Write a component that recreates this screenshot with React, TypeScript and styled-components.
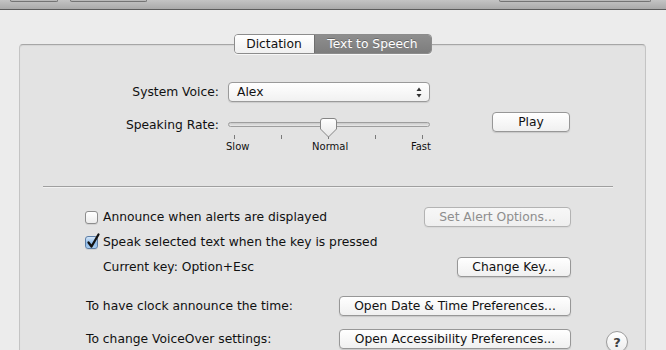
import styled, { createGlobalStyle } from "styled-components";

const GlobalStyle = createGlobalStyle`
  html, body {
    margin: 0;
    padding: 0;
    background: #ececec;
  }
  body {
    font-family: "DejaVu Sans", "Noto Sans", sans-serif;
    font-size: 12.3px;
    color: #111;
    overflow: hidden;
  }
  * { box-sizing: border-box; }
`;

const Window = styled.div`
  width: 666px;
  height: 350px;
  overflow: hidden;
  background: #ececec;
`;

const Toolbar = styled.div`
  height: 10px;
  border-bottom: 1px solid #5c5c5c;
  background: linear-gradient(#c4c4c4, #aaaaaa);
  display: flex;
  align-items: flex-start;
`;

const ToolPiece = styled.div<{ $gap: number; $width: number }>`
  margin-left: ${(p) => p.$gap}px;
  width: ${(p) => p.$width}px;
  height: 2px;
  border: 1px solid #747474;
  border-top: none;
  border-radius: 0 0 4px 4px;
  background: #b9b9b9;
`;

const Content = styled.div`
  padding: 24px 20px 0 19px;
`;

const TabBar = styled.div`
  display: flex;
  justify-content: center;
  margin-bottom: -10px;
  position: relative;
  z-index: 1;
`;

const Segmented = styled.div`
  display: flex;
  height: 20px;
  border: 1px solid #8c8c8c;
  border-radius: 4px;
  overflow: hidden;
  box-shadow: 0 1px 0 rgba(255, 255, 255, 0.7);
`;

const Segment = styled.div<{ $active?: boolean; $width: number }>`
  width: ${(p) => p.$width}px;
  display: flex;
  align-items: center;
  justify-content: center;
  font-size: 12.3px;
  color: ${(p) => (p.$active ? "#fff" : "#111")};
  background: ${(p) =>
    p.$active
      ? "linear-gradient(#8e8e8e, #7d7d7d)"
      : "linear-gradient(#ffffff, #f0f0f0)"};
  border-left: ${(p) => (p.$active ? "1px solid #6e6e6e" : "none")};
  text-shadow: ${(p) => (p.$active ? "0 -1px 0 rgba(0,0,0,0.25)" : "none")};
`;

const Panel = styled.div`
  height: 330px;
  border: 1px solid #c4c4c4;
  border-top-color: #a6a6a6;
  border-radius: 4px;
  background: #e3e3e3;
  box-shadow: inset 0 1px 1px rgba(0, 0, 0, 0.06);
`;

const VoiceGrid = styled.div`
  display: grid;
  grid-template-columns: 208px 202px auto;
  row-gap: 10px;
  padding-top: 37px;
  align-items: start;
`;

const FieldLabel = styled.div<{ $offset?: number }>`
  text-align: right;
  padding-right: 9px;
  line-height: 20px;
  margin-top: ${(p) => p.$offset ?? 0}px;
`;

const PopUp = styled.div`
  height: 20px;
  display: flex;
  align-items: center;
  justify-content: space-between;
  padding: 0 7px 0 8px;
  border: 1px solid #9a9a9a;
  border-radius: 4px;
  background: linear-gradient(#ffffff, #f1f1f1);
  box-shadow: 0 1px 1px rgba(0, 0, 0, 0.1);
`;

const Spacer = styled.div``;

const SliderBox = styled.div`
  position: relative;
  padding-top: 4px;
  margin-top: 6px;
`;

const Track = styled.div`
  height: 5px;
  border: 1px solid #9e9e9e;
  border-radius: 3px;
  background: linear-gradient(#c9c9c9, #e9e9e9);
`;

const Thumb = styled.svg`
  position: absolute;
  top: 0;
  left: 92px;
`;

const Ticks = styled.div`
  display: flex;
  justify-content: space-between;
  padding: 0 7px 0 6px;
  margin-top: 8px;
`;

const Tick = styled.div`
  width: 1px;
  height: 4px;
  background: #7a7a7a;
`;

const RateLabels = styled.div`
  display: flex;
  justify-content: space-between;
  margin: 1px -1px 0 -2px;
  font-size: 10px;
  line-height: 13px;
`;

const PushButton = styled.div<{ $width: number; $disabled?: boolean }>`
  width: ${(p) => p.$width}px;
  height: 20px;
  display: flex;
  align-items: center;
  justify-content: center;
  border: 1px solid ${(p) => (p.$disabled ? "#b3b3b3" : "#979797")};
  border-radius: 4px;
  background: ${(p) =>
    p.$disabled
      ? "linear-gradient(#f7f7f7, #efefef)"
      : "linear-gradient(#ffffff, #f0f0f0)"};
  color: ${(p) => (p.$disabled ? "#8e8e8e" : "#111")};
  box-shadow: 0 1px 1px rgba(0, 0, 0, ${(p) => (p.$disabled ? 0.05 : 0.12)});
  white-space: nowrap;
`;

const PlayCell = styled.div`
  margin-left: 62px;
`;

const Separator = styled.div`
  height: 1px;
  margin: 33px 32px 0 23px;
  background: #9f9f9f;
  box-shadow: 0 1px 0 rgba(255, 255, 255, 0.5);
`;

const Options = styled.div`
  width: 551px;
  padding: 20px 0 0 65px;
  display: flex;
  flex-direction: column;
`;

const OptionRow = styled.div<{ $gap: number }>`
  height: 20px;
  margin-top: ${(p) => p.$gap}px;
  display: flex;
  align-items: center;
  justify-content: space-between;
`;

const CheckLabel = styled.label`
  display: flex;
  align-items: center;
  gap: 5px;
`;

const Box = styled.span<{ $checked?: boolean }>`
  position: relative;
  width: 13px;
  height: 13px;
  border: 1px solid ${(p) => (p.$checked ? "#5d7ea6" : "#8d8d8d")};
  border-radius: 3px;
  background: ${(p) =>
    p.$checked
      ? "linear-gradient(#d4e6f8, #8fbbe9 55%, #a9cdf0)"
      : "linear-gradient(#ffffff, #ececec)"};
  box-shadow: 0 1px 0 rgba(0, 0, 0, 0.08);
`;

const CheckMark = styled.svg`
  position: absolute;
  left: 0;
  top: -4px;
  overflow: visible;
`;

const Indented = styled.div`
  padding-left: 18px;
`;

const ActionGrid = styled.div`
  padding: 19px 0 0 66px;
  display: grid;
  grid-template-columns: 253px 232px 35px 22px;
  row-gap: 13px;
  align-items: start;
`;

const ActionLabel = styled.div`
  line-height: 20px;
`;

const HelpCell = styled.div`
  grid-column: 4;
`;

const HelpButton = styled.div`
  width: 22px;
  height: 22px;
  margin-top: 2px;
  border-radius: 50%;
  border: 1px solid #9c9c9c;
  background: linear-gradient(#ffffff, #ececec);
  box-shadow: 0 1px 1px rgba(0, 0, 0, 0.12);
  display: flex;
  align-items: center;
  justify-content: center;
  font-weight: bold;
  font-size: 13px;
  color: #404040;
`;

function Checkbox({ checked }: { checked?: boolean }) {
  return (
    <Box $checked={checked}>
      {checked && (
        <CheckMark width="14" height="16" viewBox="0 0 14 16">
          <path
            d="M2.5 9.5 L5.5 13.5 L12.5 1.5"
            fill="none"
            stroke="#111"
            strokeWidth="2.3"
            strokeLinecap="round"
            strokeLinejoin="round"
          />
        </CheckMark>
      )}
    </Box>
  );
}

function Arrows() {
  return (
    <svg width="6" height="11" viewBox="0 0 6 11">
      <path d="M0.5 4 L3 0.5 L5.5 4 Z" fill="#333" />
      <path d="M0.5 7 L3 10.5 L5.5 7 Z" fill="#333" />
    </svg>
  );
}

export default function App() {
  return (
    <Window>
      <GlobalStyle />
      <Toolbar>
        <ToolPiece $gap={10} $width={48} />
        <ToolPiece $gap={12} $width={77} />
        <ToolPiece $gap={352} $width={152} />
      </Toolbar>
      <Content>
        <TabBar>
          <Segmented>
            <Segment $width={79}>Dictation</Segment>
            <Segment $width={117} $active>
              Text to Speech
            </Segment>
          </Segmented>
        </TabBar>
        <Panel>
          <VoiceGrid>
            <FieldLabel>System Voice:</FieldLabel>
            <PopUp>
              <span>Alex</span>
              <Arrows />
            </PopUp>
            <Spacer />
            <FieldLabel $offset={3}>Speaking Rate:</FieldLabel>
            <SliderBox>
              <Track />
              <Thumb width="17" height="20" viewBox="0 0 17 20">
                <defs>
                  <linearGradient id="thumbFill" x1="0" y1="0" x2="0" y2="1">
                    <stop offset="0" stopColor="#ffffff" />
                    <stop offset="1" stopColor="#e6e6e6" />
                  </linearGradient>
                </defs>
                <path
                  d="M3 0.5 H14 Q16.5 0.5 16.5 3 V11 L8.5 19 L0.5 11 V3 Q0.5 0.5 3 0.5 Z"
                  fill="url(#thumbFill)"
                  stroke="#858585"
                />
              </Thumb>
              <Ticks>
                <Tick />
                <Tick />
                <Tick />
                <Tick />
                <Tick />
              </Ticks>
              <RateLabels>
                <span>Slow</span>
                <span>Normal</span>
                <span>Fast</span>
              </RateLabels>
            </SliderBox>
            <PlayCell>
              <PushButton $width={78}>Play</PushButton>
            </PlayCell>
          </VoiceGrid>
          <Separator />
          <Options>
            <OptionRow $gap={0}>
              <CheckLabel>
                <Checkbox />
                Announce when alerts are displayed
              </CheckLabel>
              <PushButton $width={147} $disabled>
                Set Alert Options...
              </PushButton>
            </OptionRow>
            <OptionRow $gap={5}>
              <CheckLabel>
                <Checkbox checked />
                Speak selected text when the key is pressed
              </CheckLabel>
            </OptionRow>
            <OptionRow $gap={5}>
              <Indented>Current key: Option+Esc</Indented>
              <PushButton $width={114}>Change Key...</PushButton>
            </OptionRow>
          </Options>
          <ActionGrid>
            <ActionLabel>To have clock announce the time:</ActionLabel>
            <PushButton $width={232}>Open Date &amp; Time Preferences...</PushButton>
            <Spacer />
            <Spacer />
            <ActionLabel>To change VoiceOver settings:</ActionLabel>
            <PushButton $width={232}>Open Accessibility Preferences...</PushButton>
            <Spacer />
            <HelpCell>
              <HelpButton>?</HelpButton>
            </HelpCell>
          </ActionGrid>
        </Panel>
      </Content>
    </Window>
  );
}
